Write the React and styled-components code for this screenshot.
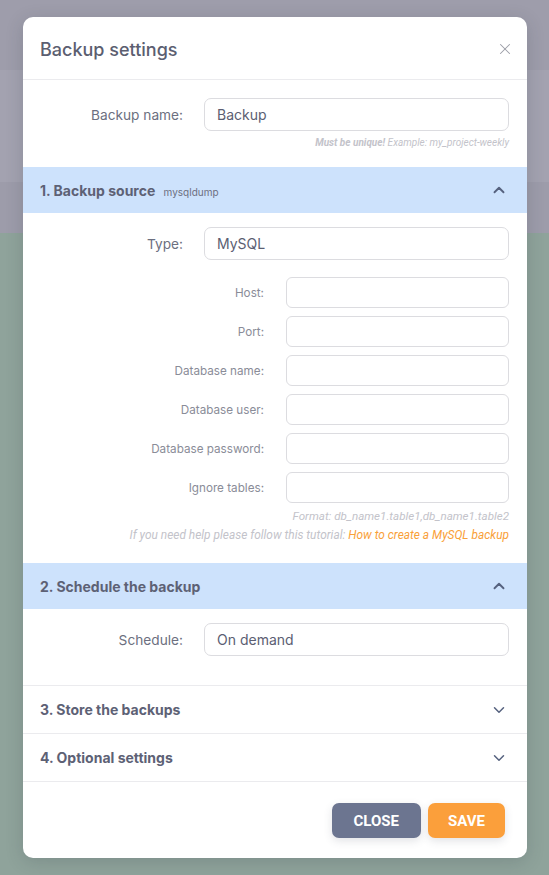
import React from 'react'
import styled, { createGlobalStyle } from 'styled-components'
import { ChevronUp, ChevronDown, X } from 'lucide-react'

const GlobalStyle = createGlobalStyle`
  html, body {
    margin: 0;
    padding: 0;
    overflow: hidden;
  }
  body {
    font-family: Inter, "Noto Sans", sans-serif;
  }
`;

const sourceFields = [
    'Host:',
    'Port:',
    'Database name:',
    'Database user:',
    'Database password:',
    'Ignore tables:',
]

const App = () => {
    return (
        <Page>
            <GlobalStyle />
            <Backdrop>
                <Strip $h={70} $bg="#9e9dab" />
                <Strip $h={112} $bg="#a3a2b0" />
                <Strip $h={51} $bg="#9d9caa" />
                <Strip $h={642} $bg="#8fa39b" />
            </Backdrop>

            <Modal>
                <Header>
                    <Title>Backup settings</Title>
                    <CloseIcon>
                        <X size={18} strokeWidth={1.4} />
                    </CloseIcon>
                </Header>

                <Block>
                    <Row>
                        <Label>Backup name:</Label>
                        <Input value="Backup" readOnly />
                    </Row>
                    <Hint $top={6} $size={10}>
                        <b>Must be unique!</b> Example: my_project-weekly
                    </Hint>
                </Block>

                <SectionHead $open>
                    <SectionTitle>
                        1. Backup source <small>mysqldump</small>
                    </SectionTitle>
                    <ChevronUp size={18} strokeWidth={2.5} />
                </SectionHead>
                <SectionBody $bottom={21}>
                    <Row>
                        <Label>Type:</Label>
                        <Input value="MySQL" readOnly />
                    </Row>
                    <SubFields>
                        {sourceFields.map((f) => (
                            <SubRow key={f}>
                                <SubLabel>{f}</SubLabel>
                                <SubInput readOnly />
                            </SubRow>
                        ))}
                    </SubFields>
                    <Hint $top={6} $size={11.6}>
                        Format: db_name1.table1,db_name1.table2
                    </Hint>
                    <Hint $top={5} $size={11.9}>
                        If you need help please follow this tutorial:{' '}
                        <Tutorial>How to create a MySQL backup</Tutorial>
                    </Hint>
                </SectionBody>

                <SectionHead $open>
                    <SectionTitle>2. Schedule the backup</SectionTitle>
                    <ChevronUp size={18} strokeWidth={2.5} />
                </SectionHead>
                <SectionBody $bottom={29} $line>
                    <Row>
                        <Label>Schedule:</Label>
                        <Input value="On demand" readOnly />
                    </Row>
                </SectionBody>

                <SectionHead $line>
                    <SectionTitle>3. Store the backups</SectionTitle>
                    <ChevronDown size={18} strokeWidth={2} />
                </SectionHead>
                <SectionHead $line>
                    <SectionTitle>4. Optional settings</SectionTitle>
                    <ChevronDown size={18} strokeWidth={2} />
                </SectionHead>

                <Footer>
                    <Button $bg="#6c7590" $pad={22}>CLOSE</Button>
                    <Button $bg="#fb9f3b" $pad={20}>SAVE</Button>
                </Footer>
            </Modal>
        </Page>
    )
}

const Page = styled.div`
    position: relative;
    width: 549px;
    height: 875px;
    overflow: hidden;
`;

const Backdrop = styled.div`
    display: flex;
    flex-direction: column;
`;

const Strip = styled.div`
    height: ${(p) => p.$h}px;
    background: ${(p) => p.$bg};
`;

const Modal = styled.div`
    position: absolute;
    top: 17px;
    left: 23px;
    width: 504px;
    height: 841px;
    background: #fff;
    border-radius: 10px;
    box-shadow: 0 4px 18px rgba(40, 50, 60, 0.18);
    display: flex;
    flex-direction: column;
    color: #5b5e72;
`;

const Header = styled.div`
    height: 63px;
    flex-shrink: 0;
    box-sizing: border-box;
    padding: 0 17px;
    display: flex;
    align-items: center;
    justify-content: space-between;
    border-bottom: 1px solid #ebebee;
`;

const Title = styled.div`
    font-size: 18px;
    font-weight: 500;
    color: #5b5e70;
    margin-top: 2px;
`;

const CloseIcon = styled.div`
    display: flex;
    color: #9a9ca6;
    margin-right: -4px;
    margin-top: 2px;
`;

const Block = styled.div`
    padding: 18px 18px 19px 17px;
`;

const Row = styled.div`
    display: flex;
    align-items: center;
`;

const Label = styled.div`
    width: 143px;
    flex-shrink: 0;
    text-align: right;
    margin-right: 21px;
    font-size: 13.7px;
    color: #6c6f80;
`;

const Input = styled.input`
    flex: 1;
    min-width: 0;
    height: 33px;
    box-sizing: border-box;
    border: 1px solid #dcdce0;
    border-radius: 7px;
    padding: 0 12px;
    font-family: Inter, sans-serif;
    font-size: 14px;
    color: #5b5e72;
    outline: none;
    background: #fff;
`;

const Hint = styled.div`
    margin-top: ${(p) => p.$top}px;
    text-align: right;
    font-family: Roboto, "Liberation Sans", sans-serif;
    font-style: italic;
    font-size: ${(p) => p.$size}px;
    color: #c3c3ca;

    b {
        font-weight: 700;
    }
`;

const Tutorial = styled.span`
    color: #f9a038;
`;

const SectionHead = styled.div`
    flex-shrink: 0;
    box-sizing: border-box;
    padding: 0 19px 0 17px;
    display: flex;
    align-items: center;
    justify-content: space-between;
    background: ${(p) => (p.$open ? '#cde2fc' : '#fff')};
    border-bottom: ${(p) => (p.$line ? '1px solid #ebebee' : 'none')};
    height: ${(p) => (p.$line ? 48 : 46)}px;
    color: #56627f;
`;

const SectionTitle = styled.div`
    font-size: 14px;
    font-weight: 700;
    color: #5d6175;

    small {
        font-size: 10px;
        font-weight: 400;
        color: #6c6f80;
        margin-left: 5px;
    }
`;

const SectionBody = styled.div`
    padding: 14px 18px ${(p) => p.$bottom}px 17px;
    border-bottom: ${(p) => (p.$line ? '1px solid #ebebee' : 'none')};
`;

const SubFields = styled.div`
    margin-top: 17px;
    display: flex;
    flex-direction: column;
    gap: 8px;
`;

const SubRow = styled.div`
    display: flex;
    align-items: center;
`;

const SubLabel = styled.div`
    width: 224px;
    flex-shrink: 0;
    text-align: right;
    margin-right: 22px;
    font-size: 11.7px;
    color: #8a8c98;
`;

const SubInput = styled.input`
    flex: 1;
    min-width: 0;
    height: 31px;
    box-sizing: border-box;
    border: 1px solid #dcdce0;
    border-radius: 6px;
    outline: none;
    background: #fff;
`;

const Footer = styled.div`
    flex: 1;
    display: flex;
    justify-content: flex-end;
    align-items: flex-start;
    gap: 7px;
    padding: 21px 22px 0 0;
`;

const Button = styled.div`
    height: 35px;
    padding: 0 ${(p) => p.$pad}px;
    display: flex;
    align-items: center;
    border-radius: 7px;
    background: ${(p) => p.$bg};
    color: #fff;
    font-family: Roboto, "Liberation Sans", sans-serif;
    font-weight: 700;
    font-size: 15px;
    box-shadow: 0 3px 8px rgba(60, 70, 90, 0.15);
`;

export default App
